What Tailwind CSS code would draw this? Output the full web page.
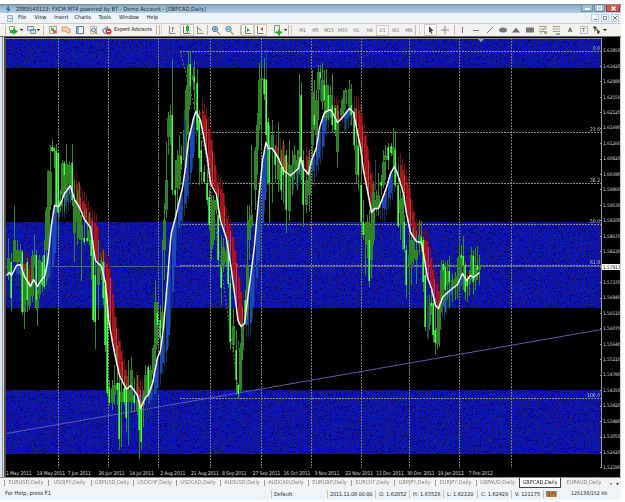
<!DOCTYPE html>
<html lang="en">
<head>
<meta charset="utf-8">
<title>GBPCAD,Daily</title>
<script src="https://cdn.jsdelivr.net/npm/@tailwindcss/browser@4"></script>
</head>
<body class="bg-white w-[625px] h-[502px] overflow-hidden font-['DejaVu_Sans_Condensed','DejaVu_Sans',sans-serif] text-[5.5px] leading-none text-[#222]">
<div class="w-[621px] h-[500px] pt-1 flex flex-col whitespace-nowrap">

  <!-- title bar -->
  <div class="h-[9px] shrink-0 flex items-center border-t border-[#7c8a94] bg-linear-to-b from-[#8caabf] to-[#b3cfe8]">
    <svg class="w-[16px] h-[8px] shrink-0" viewBox="0 0 16 8"><path d="M8 1l2 0-1 3 2 0-4 4 1-3-2 0z" fill="#237d9c"/><rect x="9" y="1" width="1" height="2" fill="#e0b030"/></svg>
    <span class="w-[192px] pt-px text-[5.7px] text-[#1d2933]">2089549113: FXCM MT4 powered by BT - Demo Account - [GBPCAD,Daily]</span>
    <div class="ml-auto h-[8px] mr-[1px] flex gap-px text-white">
      <div class="w-[12px] h-[7px] bg-[#a3bdd2] border border-[#738b9f] border-t-0 flex items-end justify-center pb-px"><i class="w-[5px] h-[2px] bg-white"></i></div>
      <div class="w-[11px] h-[7px] bg-[#a3bdd2] border border-[#738b9f] border-t-0 flex items-center justify-center"><i class="w-[5px] h-[4px] border border-white"></i></div>
      <div class="w-[14px] h-[7px] bg-[#cf5a48] border border-[#8c4038] border-t-0 flex items-center justify-center"><svg class="w-[5px] h-[5px]" viewBox="0 0 5 5"><path d="M.5.5l4 4m0-4l-4 4" stroke="#fff" stroke-width="1.2"/></svg></div>
    </div>
  </div>

  <!-- menu -->
  <div class="h-[10px] shrink-0 flex items-center bg-[#edf3fa] text-[5.6px]">
    <svg class="w-[18px] h-[9px] shrink-0" viewBox="0 0 18 9"><path d="M7.500 1.500h5v3h-5z M9.500 4.500h3v3h-5v-2" fill="#dceaf5" stroke="#7ea4bc" stroke-width=".8"/></svg>
    <span class="w-[16.500px]">File</span><span class="w-[19.500px]">View</span><span class="w-[20.500px]">Insert</span><span class="w-[24px]">Charts</span><span class="w-[20.500px]">Tools</span><span class="w-[27.500px]">Window</span><span>Help</span>
    <div class="ml-auto mr-[2px] flex gap-[2px]">
      <i class="w-[8px] h-[8px] bg-[#f5fafe] border border-[#bcd0e0] flex items-end justify-center pb-px"><b class="w-[3px] h-px bg-[#5b7d98]"></b></i>
      <i class="w-[8px] h-[8px] bg-[#f5fafe] border border-[#bcd0e0] flex items-center justify-center"><b class="w-[4px] h-[4px] border border-[#7895ab]"></b></i>
      <i class="w-[8px] h-[8px] bg-[#f5fafe] border border-[#bcd0e0] flex items-center justify-center"><svg class="w-[4px] h-[4px]" viewBox="0 0 4 4"><path d="M0 0l4 4m0-4l-4 4" stroke="#5b7d98"/></svg></i>
    </div>
  </div>

  <!-- toolbar -->
  <div class="h-[13px] shrink-0 flex items-center bg-[#f4f2ee] border-t border-[#d4c8b4] text-[5px] text-[#777]">
    <i class="w-px h-[10px] ml-[5px] bg-[#c8c0b0]"></i>
    <svg class="w-[19px] h-[12px] shrink-0" viewBox="6 0 19 12"><path d="M9.500 2.500h5v4h-5z" fill="#e8f2e4" stroke="#8aa088"/><path d="M10 6h3v-2l5 3.500-5 3.500v-2h-3z" fill="#28a83c"/><path d="M20 5h3l-1.500 2z" fill="#111"/></svg>
    <svg class="w-[18px] h-[12px] shrink-0" viewBox="25 0 18 12"><path d="M27.500 2.500h6v4h-6z M30.500 5.500h5v4h-5z" fill="#d6e6f2" stroke="#7393ac"/><path d="M37 5h3l-1.500 2z" fill="#111"/></svg>
    <i class="w-px h-[10px] bg-[#c9b79e]"></i>
    <svg class="w-[56px] h-[12px] shrink-0" viewBox="44 0 56 12"><rect x="49.500" y="2.500" width="7" height="7" fill="#e9f0e8" stroke="#a9a9a0"/><path d="M51 3l2 2 1-1v3h-3l1-1-1-1z" fill="#3c9e4d"/><path d="M53 6h3v3h-3z" fill="#df6955"/><path d="M62 3h5l1 2h2v4h-3l-1-2h-4z" fill="#f4d4a4" stroke="#d07860" stroke-width=".8"/><rect x="76.500" y="2.500" width="7" height="7" fill="#fff" stroke="#5683b1"/><path d="M77 3h2v6h-2z" fill="#92b5d6"/><path d="M90.500 2.500h6v7h-6z" fill="#fff" stroke="#b2b6b9"/><circle cx="93.500" cy="6" r="2" fill="#d4e4ee" stroke="#5d7988"/><path d="M95 8l2 2" stroke="#96742b"/></svg>
    <svg class="w-[14px] h-[12px] shrink-0" viewBox="100 0 14 12"><path d="M103 5l4-3 3 3-3 2z" fill="#88a9c4"/><path d="M103 5v3l3 2" stroke="#60656c" fill="none"/><circle cx="108.500" cy="7.500" r="3" fill="#cf4332"/><path d="M107 7.500h3" stroke="#fff"/></svg>
    <span class="w-[42px] text-[5.400px] text-[#222]">Expert Advisors</span>
    <i class="w-px h-[10px] bg-[#c9b79e]"></i><i class="w-px h-[10px] ml-[2px] bg-[#c9b79e]"></i><i class="w-px h-[10px] ml-px bg-[#d8d0c0]"></i>
    <svg class="w-[45px] h-[12px] shrink-0" viewBox="162 0 45 12"><g fill="none" stroke="#65756a" stroke-width=".8"><path d="M169.500 2v7.500h6M172.500 3v5m0-4h2"/><path d="M197.500 2v7.500h6M198 4l4 3"/></g><path d="M180.500.5h13v11h-13z" fill="#faf9f5" stroke="#c9c3b5"/><path d="M183.500 2v7.500h7" fill="none" stroke="#65756a"/><path d="M186 2h3v5h-3z M187 1h1v8h-1z" fill="#21b52e"/></svg>
    <i class="w-px h-[10px] bg-[#c9b79e]"></i>
    <svg class="w-[32px] h-[12px] shrink-0" viewBox="208 0 32 12"><g fill="#cce5f3" stroke="#47799f"><circle cx="215" cy="5" r="2.600"/><circle cx="228.500" cy="5" r="2.600"/></g><path d="M217 7.500l3 3M230.500 7.500l3 3" stroke="#c29531" stroke-width="1.400"/><path d="M213.500 5h3m-1.500-1.500v3M227 5h3" stroke="#28658c" stroke-width=".8"/></svg>
    <i class="w-px h-[10px] bg-[#c9b79e]"></i>
    <svg class="w-[28px] h-[12px] shrink-0" viewBox="241 0 28 12"><path d="M241.500.5h12v11h-12zM254.500.5h12v11h-12z" fill="#faf9f5" stroke="#d1cabd"/><path d="M245.500 2v7.500h6M257.500 2v7.500h6" fill="none" stroke="#6e7771"/><path d="M247 4l3 2-3 2z" fill="#24a044"/><path d="M263 3l-3 2 3 2z" fill="#d64c3c"/></svg>
    <svg class="w-[19px] h-[12px] shrink-0" viewBox="269 0 19 12"><path d="M274.500 1.500h5v7h-5z" fill="#eef1ed" stroke="#81937e"/><path d="M276 8.500h6m-3-3v6" stroke="#21ab2f" stroke-width="2"/><path d="M284 5h3l-1.500 2z" fill="#111"/></svg>
    <i class="w-px h-[10px] bg-[#c9b79e]"></i><i class="w-px h-[10px] ml-[2px] bg-[#d8d0c0]"></i>
    <div class="flex items-center text-center ml-[4px]">
      <span class="w-[13px]">M1</span><span class="w-[13px]">M5</span><span class="w-[14px]">M15</span><span class="w-[13.500px]">M30</span><span class="w-[13.500px]">H1</span><span class="w-[13px]">H4</span><span class="w-[13px] h-[11px] leading-[9px] bg-[#fbfaf6] border border-[#d3ccbe]">D1</span><span class="w-[13.500px]">W1</span><span class="w-[12.500px]">MN</span>
    </div>
    <i class="w-px h-[10px] bg-[#c9b79e]"></i><i class="w-px h-[10px] ml-[3px] bg-[#d8d0c0]"></i>
    <svg class="w-[190px] h-[12px] shrink-0" viewBox="420 0 190 12"><path d="M424.500.5h12v11h-12z" fill="#faf9f5" stroke="#d1cabd"/><path d="M429 2v7l1.500-1.500 1 2.500 1-.5-1-2.500h2z" fill="#444"/><path d="M441 6h8m-4-4v8" stroke="#888"/><path d="M454.500 1v10" stroke="#c9b79e"/><path d="M462.500 3v6M473 6.500h6M487 9l6-6" stroke="#777"/><ellipse cx="503" cy="6" rx="4" ry="2.500" fill="#777"/><path d="M512 8.500h8l-4-5z" fill="#6b6b6b"/><path d="M526 3.500h8v5h-8z" fill="#777"/><g stroke="#a09a82" stroke-width=".9"><path d="M539 2.500h8m-8 2.500h8m-8 2.500h8M540 10l6-8M553 2.500h7m-7 2.500h7m-7 2.500h7"/></g><path d="M544 9h3m9 1h4" stroke="#555"/><path d="M580.500 2.500h7v7h-7z" fill="none" stroke="#bbb"/><path d="M593 3l2-1 2 2-2 2zM597 6l3 1-1 3-2-1z" fill="#444"/><path d="M594 7l4-2" stroke="#666"/><path d="M603 5h4l-2 2z" fill="#111"/><text x="568" y="8" font-size="6" font-weight="bold" fill="#555">A</text><text x="582" y="8" font-size="5.500" fill="#444">T</text></svg>
  </div>

  <!-- chart window -->
  <div class="h-[441px] shrink-0 flex border-t border-[#6b6b66] bg-black relative">
    <div class="w-[6px] shrink-0 bg-[#d9e5f0] border-r-2 border-[#544a42] flex justify-end"><i class="w-px h-full mr-px bg-[#8f9297]"></i></div>
    <div class="w-[596px] flex flex-col relative">
      <canvas id="plot" width="596" height="431" class="block w-[596px] h-[431px] shrink-0"></canvas>
      <div id="dates" class="h-[9px] flex items-center pt-px text-[5px] text-[#dcdcdc]"></div>
      <div id="levels" class="absolute inset-0 text-[5px] text-[#c8c8c8]"></div>
    </div>
    <div id="prices" class="w-[18px] pt-[6px] text-[4.900px] tracking-[-0.1px] text-[#dcdcdc]"></div>
    <i class="w-px bg-[#d8cfb8] absolute right-0 inset-y-0"></i>
  </div>

  <!-- symbol tabs -->
  <div class="h-[11px] shrink-0 flex items-start border-t border-[#8b8b88] bg-[#f1f2f3] text-[5.500px] text-[#858585] pl-[4px]" id="tabs"></div>

  <!-- status -->
  <div class="h-[12px] shrink-0 flex items-center bg-[#eff4f9] text-[5.500px] text-[#222]">
    <span class="w-[271px] pl-[5px] text-[5.700px]">For Help, press F1</span>
    <span class="w-[56px] h-[8px] leading-[8px] border-l border-[#cfc3b0] pl-[2px]">Default</span>
    <span class="w-[48px] h-[8px] leading-[8px] border-l border-[#cfc3b0] pl-[2px] tracking-[-0.12px]">2011.11.08 00:00</span>
    <span class="w-[34px] h-[8px] leading-[8px] border-l border-[#cfc3b0] pl-[3px]">O: 1.62852</span>
    <span class="w-[34px] h-[8px] leading-[8px] border-l border-[#cfc3b0] pl-[3px]">H: 1.63528</span>
    <span class="w-[34px] h-[8px] leading-[8px] border-l border-[#cfc3b0] pl-[3px]">L: 1.62220</span>
    <span class="w-[34px] h-[8px] leading-[8px] border-l border-[#cfc3b0] pl-[3px]">C: 1.62429</span>
    <span class="w-[32px] h-[8px] leading-[8px] border-l border-[#cfc3b0] pl-[3px]">V: 121175</span>
    <svg class="w-[28px] h-[8px] border-l border-[#cfc3b0]" viewBox="0 0 28 8"><path d="M2 1h11v6h-11z" fill="#c8442e"/><path d="M2 1h3v3h-3zM6 4h2v3h-2zM9 2h1v5h-1zM11 1h2v3h-2z" fill="#63a13d"/><path d="M3 4v3m4-6v3m3 0v3" stroke="#ecd5a5" stroke-width=".6"/></svg>
    <span class="text-[5.300px]">125136/152 kb</span>
  </div>
</div>

<script>
// Axis prices
const prices = '1.63850 1.63420 1.62980 1.62550 1.62120 1.61690 1.61260 1.60820 1.60390 1.59960 1.59530 1.59100 1.58670 1.58230 1.57917 1.57370 1.56940 1.56510 1.56070 1.55640 1.55210 1.54780 1.54350 1.53920 1.53480 1.53050 1.52620 1.52190'.split(' ');
document.getElementById('prices').innerHTML = prices.map((p, i) =>
  `<div class="h-[15.44px] flex items-center"><span class="${i === 14 ? 'bg-white text-black w-[18px] h-[6px] leading-[6px] pl-px' : 'pl-px'}">${p}</span></div>`).join('');

// Dates
const dates = ['1 May 2011','19 May 2011','7 Jun 2011','26 Jun 2011','14 Jul 2011','2 Aug 2011','21 Aug 2011','8 Sep 2011','27 Sep 2011','16 Oct 2011','3 Nov 2011','22 Nov 2011','11 Dec 2011','30 Dec 2011','19 Jan 2012','7 Feb 2012'];
document.getElementById('dates').innerHTML = dates.map(d => `<span class="w-[30.85px] shrink-0 tracking-[-0.1px]">${d}</span>`).join('');

// Retracement levels
const levels = [[51,'0.0'],[132,'23.6'],[183,'38.2'],[224,'50.0'],[265,'61.8'],[398,'100.0']];
document.getElementById('levels').innerHTML = levels.map(([y, t]) =>
  `<span class="absolute right-[2px]" style="top:${y - 42}px">${t}</span>`).join('');

// Tabs
const tabs = [['EURUSD',44],['USDJPY',43],['GBPUSD',42],['USDCHF',43],['USDCAD',44],['AUDUSD',44],['AUDCAD',44],['EURGBP',43],['EURCHF',43],['GBPJPY',41],['EURJPY',41],['GBPAUD',43],['GBPCAD',42],['EURAUD',46]];
document.getElementById('tabs').innerHTML = tabs.map(([t, w]) =>
  `<div class="${t === 'GBPCAD' ? 'h-[10px] bg-white border border-t-0 border-[#444] text-[#222]' : 'h-[10px]'} shrink-0 flex items-center justify-center relative" style="width:${w}px">${t === 'GBPCAD' || t === 'EURAUD' ? '' : '<i class="absolute left-0 top-[2px] w-px h-[6px] bg-[#999]"></i>'}${t},Daily</div>`).join('') +
  '<span class="ml-auto mr-[5px] leading-[10px] text-[5px]">◂</span><span class="mr-[2px] leading-[10px] text-[5px] text-black">▸</span>';

// Plot, in window coordinates
const c = document.getElementById('plot').getContext('2d');
c.translate(-6, -37);
c.fillStyle = '#000'; c.fillRect(6, 37, 596, 431);
let seed = 12345;
const rnd = () => (seed = (seed * 1103515245 + 12345) & 0x7fffffff) / 0x7fffffff;
const bar = (x, a, b, w, col) => { c.fillStyle = col; c.fillRect(Math.round(x), Math.round(Math.min(a, b)), w, Math.max(1, Math.round(Math.abs(b - a)))); };

// Dithered zones
for (const [a, b] of [[39, 68], [222, 308], [390, 454]])
  for (let y = a; y < b; y++) for (let x = 6; x < 601; x++) {
    const k = (x + 2 * y) % 4, r = rnd();
    const col = k === 0 ? (r < .32 ? '#3a1230' : r < .5 ? '#08081c' : '#0b2480') : k === 2 ? (r < .45 ? '#0c2a80' : '#0b0bcc') : (r < .15 ? '#0c2098' : '#0a0acc');
    bar(x, y, y + 1, 1, col);
  }

// Grid
for (const x of [58, 108, 158, 210, 261, 311, 361, 409, 459, 511])
  for (let y = 38; y < 468; y += 3) bar(x, y, y + 2, 1, '#7c7c74');
for (const [y] of levels)
  for (let x = 180; x < 601; x += 3) bar(x, y, y + 1, 2, '#8e8e86');
bar(6, 266, 267, 595, '#55618f');
bar(6, 38, 39, 596, '#8a8a86');
bar(601, 38, 468, 1, '#9a9a9a');
for (let i = 0; i < 28; i++) bar(600, 50.5 + i * 15.44, 51.5 + i * 15.44, 3, '#9a9a9a');

const stroke = (pts, col, w, dash) => { c.beginPath(); pts.forEach(([x, y], i) => i ? c.lineTo(x + .5, y + .5) : c.moveTo(x + .5, y + .5)); c.strokeStyle = col; c.lineWidth = w; c.setLineDash(dash || []); c.lineJoin = 'round'; c.stroke(); };
stroke([[6, 433], [601, 329]], '#6257b8', 1);
stroke([[180, 51], [205, 152], [239, 398]], '#77776e', 1, [2, 2]);
c.fillStyle = '#a0a0b0'; c.beginPath(); c.moveTo(478, 39); c.lineTo(484, 39); c.lineTo(481, 42); c.fill();

// Moving average
const ma = [[6,275],[9,272],[11,275],[16,265],[20,264],[24,276],[30,286],[33,279],[37,286],[41,279],[44,276],[47,262],[49,244],[51,224],[54,205],[58,206],[61,201],[64,193],[70,185],[74,199],[79,207],[84,219],[90,227],[93,248],[95,260],[101,266],[105,283],[108,318],[112,342],[115,357],[119,375],[126,389],[130,385],[133,389],[137,395],[140,408],[145,397],[148,394],[152,383],[157,357],[160,350],[163,327],[167,280],[170,240],[171,232],[175,217],[182,187],[185,167],[188,140],[193,118],[195.5,111],[200,120],[203,135],[207,158],[210,183],[216,194],[220,220],[226,238],[231,270],[235,300],[237.5,320],[240.5,326],[244,323],[246.5,303],[250,277],[254,245],[258,200],[262,160],[265.5,142],[268,148],[272,148],[278,158],[283,170],[290,175],[298,168],[300,157],[303,168],[308,174],[311,160],[316,147],[319,127],[324,112],[330,109],[333,114],[337,122],[342,117],[349,108],[353,112],[357,132],[360,147],[363,170],[367,190],[371,212],[374,208],[378,208],[382,198],[386,187],[390,173],[394,166],[397,173],[400,183],[403,193],[406,213],[410,232],[416,241],[421,242],[423,253],[427,277],[431,288],[435,305],[438,308],[442,297],[447,292],[452,288],[457,284],[462,273],[466,280],[470,275],[473,277],[479,272]];
const at = x => { if (x <= 6) return 275; for (let i = 1; i < ma.length; i++) if (ma[i][0] >= x) { const [a, p] = ma[i - 1], [b, q] = ma[i]; return p + (q - p) * (x - a) / (b - a); } return 272; };

// Trend bars trailing the average
for (let x = 8, i = 0; x < 480; x += 2, i++) {
  const m = at(x), o = at(x - 6), up = o > m;
  if (Math.abs(o - m) < 5) { bar(x, m - 8, m + 8, 1, up ? '#12305a' : '#5a0c10'); continue; }
  if (up) { bar(x, m - 3, o + 12, 1, '#143460'); bar(x, m, o, i % 3 ? 2 : 1, i % 3 ? '#1c48bc' : '#183c80'); }
  else { bar(x, o - 13, m + 3, 1, '#6a0e12'); bar(x, o - 1, m, i % 3 ? 2 : 1, i % 3 ? '#a8161c' : '#fa2a2a'); }
}

// Candles: x, high, low, body top, body bottom, falling
const candles = [[8,238,280,258,275,0],[11,253,311,262,298,1],[14,206,262,240,262,0],[17,240,265,250,262,0],[20,244,275,250,262,0],[22,250,315,252,312,1],[24,268,329,275,312,0],[27,258,312,262,300,1],[29,280,310,283,306,0],[32,250,302,256,296,0],[34,234,265,255,262,0],[36,250,310,255,308,1],[37,290,326,300,308,0],[39,255,299,260,295,0],[42,256,292,262,285,1],[44,240,289,255,287,1],[46,207,285,210,250,0],[48,170,245,171,240,0],[50,145,210,172,205,0],[52,139,152,147,151,1],[54,147,168,148,151,1],[56,144,212,151,205,1],[58,152,236,153,213,1],[60,190,212,200,207,0],[62,160,206,163,195,0],[64,161,212,163,175,1],[66,144,200,164,190,0],[69,162,195,165,184,0],[72,144,206,163,200,1],[74,180,262,200,233,0],[77,190,245,205,222,0],[79,182,240,215,238,0],[81,215,281,225,240,0],[84,210,245,238,242,1],[87,225,243,238,241,1],[89,212,245,230,241,0],[91,225,280,240,256,1],[93,240,322,246,320,1],[95,260,349,275,322,1],[98,240,320,263,285,0],[101,258,280,263,273,0],[103,250,305,262,298,1],[105,280,352,285,345,1],[107,295,396,300,393,1],[109,380,405,388,403,1],[112,380,410,388,403,0],[114,365,405,385,395,0],[117,345,405,383,390,1],[119,375,450,383,439,1],[121,382,447,392,402,0],[124,376,405,388,402,1],[126,384,432,387,418,1],[128,360,445,390,402,0],[131,357,412,370,402,0],[134,378,412,395,403,1],[137,375,415,400,410,0],[139,395,459,400,430,1],[141,401,450,405,442,1],[143,390,427,395,405,0],[145,365,400,375,396,0],[148,365,398,367,396,1],[150,365,393,370,390,0],[153,345,382,348,374,0],[155,280,362,302,350,0],[157,302,345,313,325,1],[160,305,355,320,338,1],[162,240,330,312,328,0],[164,203,280,220,250,0],[166,142,218,180,210,0],[168,112,155,118,137,0],[170,105,145,115,125,0],[172,59,195,115,190,1],[175,160,217,190,195,1],[177,150,210,160,188,0],[179,135,190,155,185,0],[181,145,170,156,164,1],[184,111,165,130,160,0],[186,85,168,90,135,0],[188,51,140,65,110,0],[190,51,105,64,86,1],[193,67,90,75,80,0],[194,61,110,77,82,1],[197,69,132,83,130,1],[199,110,185,120,158,1],[201,140,184,150,172,1],[204,165,183,172,182,1],[207,170,205,183,200,1],[209,190,230,197,225,1],[211,195,260,228,250,0],[213,195,245,200,240,0],[216,193,215,200,210,0],[218,196,267,215,260,1],[221,235,305,267,288,1],[223,238,272,247,265,0],[226,240,265,251,262,0],[228,240,288,250,284,1],[230,275,350,283,342,1],[233,308,352,326,345,0],[236,330,395,350,380,1],[238,384,398,385,394,1],[240,343,393,348,390,0],[242,320,360,325,350,0],[245,290,325,300,320,1],[247,205,320,265,310,0],[249,206,260,220,240,0],[251,145,228,215,226,0],[255,147,210,150,190,0],[257,113,175,125,150,0],[259,63,130,80,125,0],[261,59,150,78,80,0],[264,58,100,79,94,1],[266,49,145,79,135,1],[268,118,185,122,183,1],[269,125,223,145,183,1],[272,120,203,135,148,0],[275,145,183,152,165,1],[278,122,192,158,180,0],[281,150,200,167,190,1],[283,140,203,167,175,1],[286,150,233,155,210,1],[289,140,221,165,211,0],[292,150,195,165,178,0],[294,145,180,155,170,0],[297,150,190,160,170,0],[299,74,175,150,165,0],[301,82,180,95,160,1],[303,150,227,160,205,1],[306,170,213,180,205,0],[309,150,212,160,195,0],[312,70,165,92,145,0],[314,80,130,115,125,1],[316,90,155,100,135,0],[318,65,120,72,90,0],[320,65,95,72,84,1],[322,63,110,80,102,0],[324,70,118,85,100,1],[326,69,122,85,118,0],[328,85,120,95,110,1],[330,86,118,95,108,0],[332,74,132,105,125,1],[335,105,136,108,130,1],[337,105,167,120,152,0],[341,100,120,108,115,0],[343,90,115,98,110,0],[345,88,118,90,104,0],[349,80,108,89,106,0],[351,84,125,105,115,1],[354,108,150,112,145,1],[356,130,184,145,175,0],[358,138,190,147,175,1],[361,150,224,185,222,1],[363,200,240,222,235,1],[365,222,275,225,235,0],[367,215,258,222,245,0],[369,210,287,240,281,1],[371,205,278,225,260,0],[373,181,245,192,240,0],[376,190,212,200,208,0],[378,173,215,195,205,0],[381,175,195,182,186,1],[383,150,188,162,185,0],[385,145,180,155,160,0],[388,143,170,147,160,1],[391,143,156,146,153,1],[393,128,170,147,155,0],[395,131,187,150,185,1],[398,165,228,185,226,1],[400,190,240,200,213,0],[402,195,250,198,225,0],[404,215,252,222,249,1],[406,245,298,250,285,1],[409,235,293,255,265,0],[411,232,285,240,262,0],[413,228,265,240,258,0],[416,235,284,250,260,0],[419,220,255,235,245,0],[421,221,252,237,242,1],[423,237,292,240,282,1],[425,260,331,275,327,1],[429,295,330,305,325,0],[431,290,315,303,306,1],[433,297,342,303,335,1],[435,298,354,330,343,1],[437,305,350,328,344,0],[439,300,347,305,330,0],[441,260,312,270,300,0],[443,260,305,264,270,1],[445,262,312,267,290,1],[447,260,300,271,285,0],[449,256,308,271,282,1],[452,273,302,280,288,0],[455,272,300,278,285,0],[457,258,298,276,283,0],[459,243,290,256,280,0],[461,245,280,255,258,1],[463,236,290,256,265,1],[465,262,300,265,292,1],[467,275,302,280,286,1],[469,270,296,278,284,0],[471,247,280,255,275,0],[473,250,295,256,282,1],[475,248,290,268,280,0],[477,246,280,265,270,1],[479,255,285,265,270,0]];
for (const [x, h, l, t, b, f] of candles) {
  bar(x, h, l, 1, '#358a2a');
  if (f) { bar(x - 1, t, b, 2, '#2fb42f'); bar(x, t, b, 1, '#4cff4c'); }
  else bar(x - 1, t, b, 3, '#2f8428');
}
for (const [x, a, b] of [[184,110,195],[185,120,180],[266,49,80],[375,160,190],[427,295,338],[428,305,340],[238,340,350],[293,165,190],[320,78,100],[345,92,130]]) bar(x, a, b, 1, '#1a4a62');
stroke(ma, '#f4f4f4', 1.5);
</script>
</body>
</html>
